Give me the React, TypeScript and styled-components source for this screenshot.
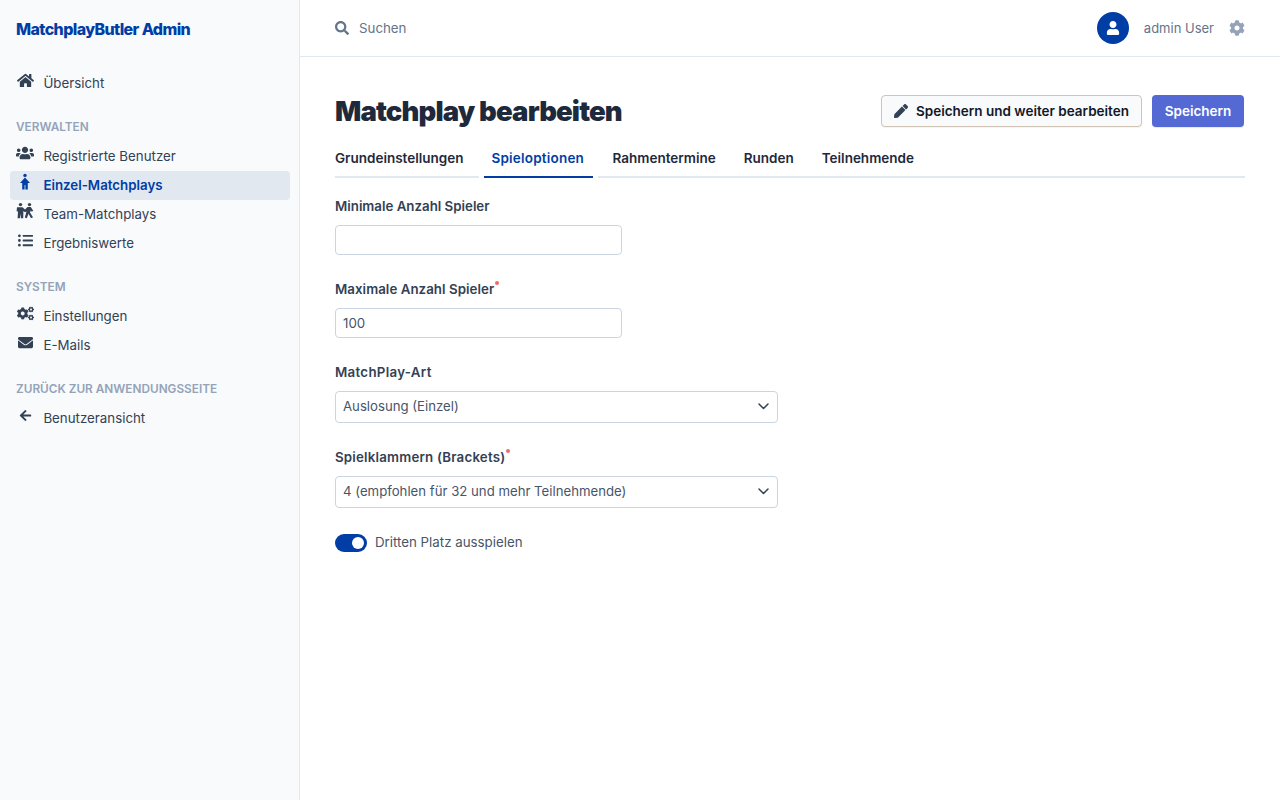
import React from "react";
import styled, { createGlobalStyle } from "styled-components";
import { FaHome, FaUsers, FaListUl, FaCogs, FaEnvelope, FaArrowLeft, FaSearch, FaUser, FaCog, FaPen } from "react-icons/fa";

const Global = createGlobalStyle`
  html, body { margin: 0; padding: 0; height: 100%; background: #fff; }
  body { font-family: "Inter", "Liberation Sans", sans-serif; font-size: 14px; color: #334155; }
  #root { height: 100%; }
  * { box-sizing: border-box; }
`;

const Shell = styled.div`display: flex; height: 800px; overflow: hidden;`;
const Sidebar = styled.aside`
  width: 300px; flex: none; background: #f8fafc; border-right: 1px solid #e2e8f0;
  padding: 0 9px 0 10px;
`;
const Brand = styled.div`
  height: 58px; display: flex; align-items: center; padding-left: 6px;
  font-family: "Inter", sans-serif; font-weight: 800; font-size: 16px; letter-spacing: -0.6px; color: #003da5; white-space: nowrap;
`;
const Section = styled.div`margin-top: ${p => p.$top ?? 0}px;`;
const SectionTitle = styled.div`
  height: 20px; line-height: 20px; padding-left: 6px; margin-bottom: 5px;
  font-size: 11.8px; font-weight: 600; color: #94a3b8; white-space: nowrap;
`;
const NavItem = styled.a`
  display: flex; align-items: center; height: 29px; padding: 0 0 1px 6px; border-radius: 4px;
  font-size: 13.3px; white-space: nowrap;
  font-weight: ${p => (p.$active ? 600 : 400)};
  color: ${p => (p.$active ? "#003da5" : "#334155")};
  background: ${p => (p.$active ? "#e2e8f0" : "transparent")};
`;
const NavIcon = styled.span`
  width: 18px; height: 18px; margin-right: 9.4px; margin-top: -6px; flex: none;
  display: flex; align-items: center; justify-content: center; font-size: 15px;
  color: ${p => (p.$active ? "#003da5" : "#334155")};
`;
const Main = styled.div`flex: 1; min-width: 0; display: flex; flex-direction: column;`;
const Topbar = styled.header`
  height: 57px; flex: none; border-bottom: 1px solid #e2e8f0; padding: 0 35px;
  display: flex; align-items: center;
`;
const Search = styled.div`
  display: flex; align-items: center; gap: 10px; flex: 1; color: #64748b; font-size: 13.3px;
`;
const Avatar = styled.span`
  width: 32px; height: 32px; border-radius: 50%; background: #003da5; color: #fff;
  display: flex; align-items: center; justify-content: center; font-size: 14px;
`;
const UserName = styled.span`margin: 0 15px; color: #64748b; font-size: 13px;`;
const Content = styled.main`padding: 38px 35px 0;`;
const TitleRow = styled.div`display: flex; align-items: center; justify-content: space-between; padding-right: 1px;`;
const Title = styled.h1`
  margin: 0; font-family: "Inter", sans-serif; font-weight: 900; font-size: 27.5px; line-height: 32px; color: #1e293b;
  letter-spacing: -0.85px; white-space: nowrap;
`;
const Actions = styled.div`display: flex; gap: 10px;`;
const SecondaryButton = styled.button`
  height: 32px; padding: 0 12px; display: flex; align-items: center; gap: 8px;
  border: 1px solid #cfc4b5; border-radius: 4px; background: #f8fafc; color: #111827;
  font: 600 13.5px "Inter", sans-serif; box-shadow: 0 1px 1px rgba(0,0,0,.05);
`;
const PrimaryButton = styled.button`
  height: 32px; width: 92px; padding: 0; border: 0; border-radius: 4px; background: #5469d4; color: #fff;
  font: 600 13.5px "Inter", sans-serif; box-shadow: 0 1px 1px rgba(0,0,0,.1);
`;
const Tabs = styled.nav`
  display: flex; height: 36px; margin-top: 15px; border-bottom: 2px solid #e2e8f0;
`;
const Tab = styled.a`
  height: 36px; display: flex; align-items: center; margin-right: 12px; padding: 2px 8px 4px;
  font-size: 13.5px; font-weight: 600; white-space: nowrap; color: ${p => (p.$active ? "#003da5" : "#1e293b")};
  letter-spacing: ${p => (p.$active ? "0.2px" : "0")};
  border-bottom: 2px solid ${p => (p.$active ? "#003da5" : "transparent")};
  box-shadow: ${p => (p.$active ? "5px 0 0 #fff, -5px 0 0 #fff" : "none")};
  min-width: ${p => (p.$active ? "109px" : "0")};
  &:first-child { padding-left: 0; }
`;
const Form = styled.form`display: flex; flex-direction: column; padding-top: 18px;`;
const Field = styled.div`margin-bottom: ${p => p.$mb ?? 24}px;`;
const Label = styled.label`
  display: block; height: 20px; line-height: 20px; margin-bottom: 9px;
  font-size: 13.3px; font-weight: 600; color: #334155; white-space: nowrap;
  letter-spacing: ${p => p.$spacing ?? 0}px;
`;
const Req = styled.span`
  display: inline-block; width: 4px; height: 4px; border-radius: 50%; background: #ef6a6a;
  vertical-align: 9px; margin-left: 1px;
`;
const Input = styled.input`
  display: block; width: 287px; height: 30px; padding: 0 7px; border: 1px solid #cbd5e1; border-radius: 4px;
  font: 400 13.3px "Inter", sans-serif; color: #475569; background: #fff;
`;
const Select = styled.div`
  width: 443px; height: 32px; padding: 0 8px 2px 7px; border: 1px solid #cbd5e1; border-radius: 4px;
  display: flex; align-items: center; justify-content: space-between; font-size: 13.2px; color: #475569;
`;
const ToggleRow = styled.div`display: flex; align-items: center; gap: 8px; font-size: 13.3px; color: #475569;`;
const ToggleText = styled.span`padding-bottom: 2px;`;
const Toggle = styled.span`
  width: 32px; height: 18px; border-radius: 9px; background: #003da5; display: flex; align-items: center; justify-content: flex-end; padding-right: 3px;
`;
const Knob = styled.span`width: 12px; height: 12px; border-radius: 50%; background: #fff;`;

const Chevron = () => (
  <svg width="11" height="8" viewBox="0 0 11 8" fill="none" stroke="#334155" strokeWidth="1.5" strokeLinecap="round" strokeLinejoin="round">
    <path d="M1 2 L5.5 6.5 L10 2" />
  </svg>
);
const Person = () => (
  <svg width="16" height="18" viewBox="0 0 16 18" fill="currentColor">
    <circle cx="8" cy="2.4" r="1.7" />
    <path d="M8 4.6 L13 10 L10.8 10 L10.8 16.5 L8.4 16.5 L8.4 12 L7.6 12 L7.6 16.5 L5.2 16.5 L5.2 10 L3 10 Z" />
  </svg>
);
const Team = () => (
  <svg width="18" height="18" viewBox="0 0 18 18" fill="currentColor">
    <circle cx="4.5" cy="2.6" r="1.7" /><circle cx="13.5" cy="2.6" r="1.7" />
    <path d="M1 5.2 H6.5 L9 7.6 L11.5 5 H14.8 L17.2 8.8 L15.8 9.7 L14.8 8.4 L14 10.4 L17 15.2 L15 16.2 L12.5 11.8 L10.8 16.2 L8.8 15.4 L10.5 9.4 L9 10.2 L7.4 8.9 L7.2 16.2 L4.9 16.2 L4.5 11.8 L3.9 16.2 L1.6 16.2 L2 9.5 L0.6 9.3 Z" />
  </svg>
);

export default function App() {
  return (
    <Shell>
      <Global />
      <Sidebar>
        <Brand>MatchplayButler Admin</Brand>
        <Section $top={11}>
          <NavItem><NavIcon><FaHome size={17} /></NavIcon>Übersicht</NavItem>
        </Section>
        <Section $top={19}>
          <SectionTitle>VERWALTEN</SectionTitle>
          <NavItem><NavIcon><FaUsers size={18} /></NavIcon>Registrierte Benutzer</NavItem>
          <NavItem $active><NavIcon $active><Person /></NavIcon>Einzel-Matchplays</NavItem>
          <NavItem><NavIcon><Team /></NavIcon>Team-Matchplays</NavItem>
          <NavItem><NavIcon><FaListUl /></NavIcon>Ergebniswerte</NavItem>
        </Section>
        <Section $top={19}>
          <SectionTitle>SYSTEM</SectionTitle>
          <NavItem><NavIcon><FaCogs size={17} /></NavIcon>Einstellungen</NavItem>
          <NavItem><NavIcon><FaEnvelope /></NavIcon>E-Mails</NavItem>
        </Section>
        <Section $top={19}>
          <SectionTitle>ZURÜCK ZUR ANWENDUNGSSEITE</SectionTitle>
          <NavItem><NavIcon><FaArrowLeft size={13} /></NavIcon>Benutzeransicht</NavItem>
        </Section>
      </Sidebar>
      <Main>
        <Topbar>
          <Search><FaSearch size={14} />Suchen</Search>
          <Avatar><FaUser /></Avatar>
          <UserName>admin User</UserName>
          <FaCog size={16} color="#94a3b8" />
        </Topbar>
        <Content>
          <TitleRow>
            <Title>Matchplay bearbeiten</Title>
            <Actions>
              <SecondaryButton><FaPen size={14} color="#334155" />Speichern und weiter bearbeiten</SecondaryButton>
              <PrimaryButton>Speichern</PrimaryButton>
            </Actions>
          </TitleRow>
          <Tabs>
            <Tab>Grundeinstellungen</Tab>
            <Tab $active>Spieloptionen</Tab>
            <Tab>Rahmentermine</Tab>
            <Tab>Runden</Tab>
            <Tab>Teilnehmende</Tab>
          </Tabs>
          <Form>
            <Field><Label>Minimale Anzahl Spieler</Label><Input /></Field>
            <Field><Label $spacing={0.05}>Maximale Anzahl Spieler<Req /></Label><Input defaultValue="100" /></Field>
            <Field><Label $spacing={0.3}>MatchPlay-Art</Label><Select>Auslosung (Einzel)<Chevron /></Select></Field>
            <Field $mb={26}><Label $spacing={0.2}>Spielklammern (Brackets)<Req /></Label><Select>4 (empfohlen für 32 und mehr Teilnehmende)<Chevron /></Select></Field>
            <ToggleRow><Toggle><Knob /></Toggle><ToggleText>Dritten Platz ausspielen</ToggleText></ToggleRow>
          </Form>
        </Content>
      </Main>
    </Shell>
  );
}
